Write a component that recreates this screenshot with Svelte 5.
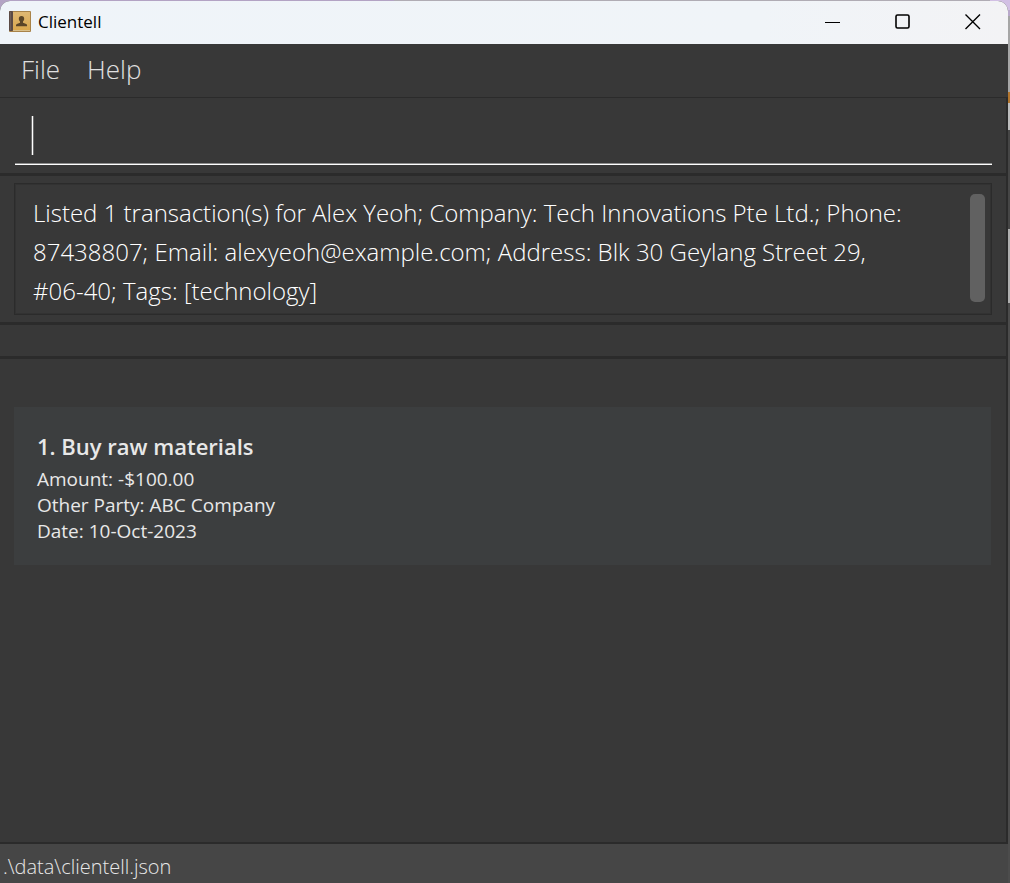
<script>
  let command = $state('');
  const result =
    'Listed 1 transaction(s) for Alex Yeoh; Company: Tech Innovations Pte Ltd.; Phone: 87438807; Email: alexyeoh@example.com; Address: Blk 30 Geylang Street 29, #06-40; Tags: [technology]';
  const transactions = [
    { name: 'Buy raw materials', amount: '-$100.00', party: 'ABC Company', date: '10-Oct-2023' }
  ];
</script>

<div class="desktop">
  <div class="window">
    <header class="titlebar">
      <svg class="logo" viewBox="0 0 22 21" aria-hidden="true">
        <defs>
          <linearGradient id="cover" x1="0" y1="0" x2="0" y2="1">
            <stop offset="0" stop-color="#dfb874" />
            <stop offset="1" stop-color="#dba84e" />
          </linearGradient>
        </defs>
        <rect x="0" y="0" width="22" height="21" rx="1" fill="#a98349" />
        <rect x="4" y="1" width="17" height="18" fill="url(#cover)" />
        <rect x="0" y="0" width="4" height="20" rx="1" fill="#5b4a45" />
        <rect x="1" y="1" width="1" height="18" fill="#6f5e58" />
        <rect x="4" y="19" width="17" height="1" fill="#d9c08c" />
        <path d="M12.5 5c1.8 0 2.8 1.2 2.7 3-.1 1.2-.6 2-1.2 2.600v1.200l3.200 1.300c.7.3.9.9.9 2.100H7c0-1.200.2-1.800.9-2.100l3.100-1.300v-1.200C10.400 10 9.900 9.200 9.800 8c-.1-1.800.9-3 2.700-3z" fill="#5b4528" />
      </svg>
      <span class="title">Clientell</span>
      <button class="control" aria-label="Minimize">
        <svg viewBox="0 0 16 16"><path d="M0 8.500h15" /></svg>
      </button>
      <button class="control" aria-label="Maximize">
        <svg viewBox="0 0 16 16"><rect x="1" y="1" width="13" height="13" rx="1.500" stroke-width="1.600" /></svg>
      </button>
      <button class="control" aria-label="Close">
        <svg viewBox="0 0 16 16"><path d="M.5.5l14.500 14.500M15 .5L.5 15" stroke-width="1.400" /></svg>
      </button>
    </header>

    <nav class="menubar">
      <button>File</button>
      <button>Help</button>
    </nav>

    <div class="pane command">
      <div class="field">
        <span class="caret"></span>
        <input type="text" aria-label="Command" bind:value={command} />
      </div>
    </div>

    <div class="pane result">
      <div class="output">
        <p>{result}</p>
        <div class="thumb"></div>
      </div>
    </div>

    <div class="pane spacer"></div>

    <main class="pane list">
      {#each transactions as item, i}
        <article class="card">
          <h2>{i + 1}. {item.name}</h2>
          <p>Amount: {item.amount}</p>
          <p>Other Party: {item.party}</p>
          <p>Date: {item.date}</p>
        </article>
      {/each}
    </main>

    <footer class="status">.\data\clientell.json</footer>
  </div>
</div>

<style>
  :global(body) {
    margin: 0;
    background: #464646;
  }
  .desktop {
    box-sizing: border-box;
    min-height: 100vh;
    display: flex;
    padding: 1px 2px 0 0;
    background:
      linear-gradient(90deg, #b3a3c4 39%, #b0acb4 39% 98%, #d2c0e4 98%) top / 100% 10px no-repeat,
      linear-gradient(#b9a9cb 0 16px, #a6a6a6 16px 92px, #b3762e 92px 103px, #bdbdbd 103px 130px, #464646 130px 229px, #b0b0b0 229px 303px, #4c4c4c 303px);
    font-family: 'Open Sans', 'Noto Sans', sans-serif;
  }
  .window {
    flex: 1;
    min-width: 0;
    display: flex;
    flex-direction: column;
    background: #383838;
    border-radius: 10px 10px 0 0;
    overflow: hidden;
  }
  .titlebar {
    box-sizing: border-box;
    display: flex;
    align-items: center;
    height: 43px;
    padding: 0 0 2px 9px;
    background: linear-gradient(90deg, #eff4f9, #f0f4f8 75%, #f3f3f5);
  }
  .logo {
    width: 22px;
    height: 21px;
    margin-right: 7px;
  }
  .title {
    flex: 1;
    font-size: 17px;
    color: #000;
  }
  .control {
    width: 70px;
    height: 41px;
    padding: 0;
    border: 0;
    background: none;
    display: grid;
    place-items: center;
  }
  .control svg {
    width: 16px;
    height: 16px;
    fill: none;
    stroke: #000;
    stroke-width: 1;
  }
  .menubar {
    box-sizing: border-box;
    display: flex;
    gap: 27px;
    padding: 0 21px 3px;
    height: 53px;
  }
  .menubar button {
    padding: 0;
    border: 0;
    background: none;
    font: 300 26px 'Open Sans', 'Noto Sans', sans-serif;
    color: #e0e0e0;
  }
  .pane {
    box-sizing: border-box;
    border: 1px solid #2b2b2b;
    border-width: 1px 2px 2px 0;
  }
  .command {
    padding: 18px 14px 8px 15px;
  }
  .field {
    display: flex;
    align-items: flex-start;
    height: 48px;
    padding-left: 17px;
    border-bottom: 1px solid #fff;
    box-shadow: inset 0 -1px #8d8d8d;
  }
  .caret {
    width: 1px;
    height: 39px;
    background: #fff;
    box-shadow: -1px 0 #6c6c6c, 1px 0 #6c6c6c;
  }
  .field input {
    flex: 1;
    height: 39px;
    padding: 0;
    border: 0;
    outline: 0;
    background: none;
    font: 300 24px 'Open Sans', sans-serif;
    color: #fff;
  }
  .result {
    padding: 7px 14px 7px;
  }
  .output {
    display: flex;
    align-items: center;
    gap: 50px;
    padding: 9px 6px 4px 18px;
    border: 1px solid #2b2b2b;
    box-shadow: inset 0 0 0 1px #323232;
  }
  .output p {
    flex: 1;
    margin: 0;
    font-weight: 300;
    font-size: 24px;
    line-height: 39px;
    color: #fff;
  }
  .thumb {
    width: 15px;
    height: 108px;
    margin-bottom: 8px;
    border-radius: 5px;
    background: #616161;
  }
  .spacer {
    height: 34px;
  }
  .list {
    flex: 1;
    padding: 48px 15px 0 14px;
  }
  .card {
    padding: 22px 23px 21px;
    background: #3c3e3f;
    color: #e8e8e8;
  }
  .card h2 {
    margin: 0 0 2px;
    font-weight: 600;
    font-size: 22px;
    line-height: 35px;
  }
  .card p {
    margin: 0;
    font-size: 19px;
    line-height: 26px;
  }
  .status {
    padding: 7px 3px 0;
    font-weight: 300;
    font-size: 20px;
    line-height: 32px;
    background: #464646;
    color: #e8e8e8;
  }
</style>
